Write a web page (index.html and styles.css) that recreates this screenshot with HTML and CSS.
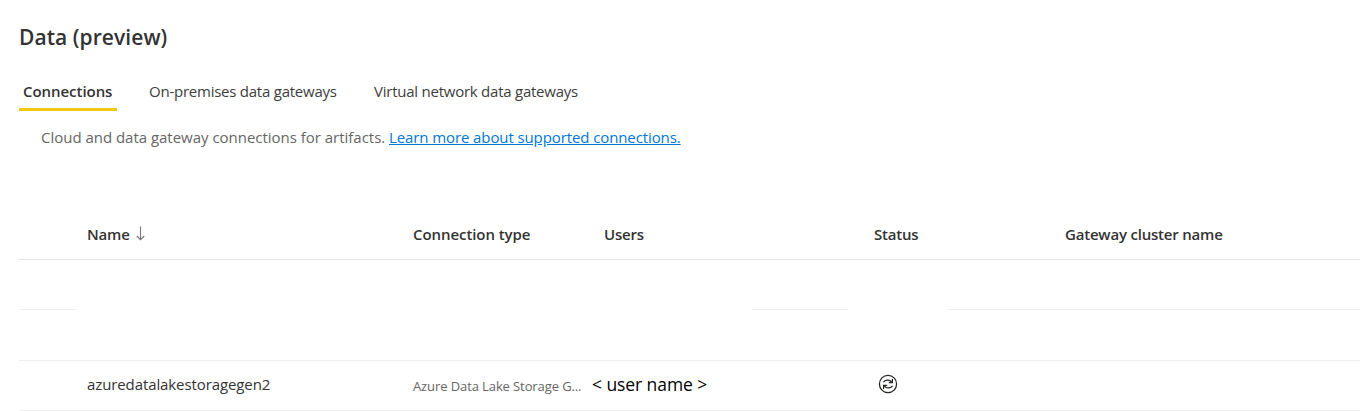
FILE: index.html
```html
<!DOCTYPE html>
<html lang="en">
<head>
<meta charset="utf-8">
<title>Data (preview)</title>
<link rel="stylesheet" href="styles.css">
</head>
<body>
<main class="page">
  <h1 class="title">Data (preview)</h1>
  <nav class="tabs">
    <a class="tab tab-active">Connections</a>
    <a class="tab tab-gateways">On-premises data gateways</a>
    <a class="tab tab-virtual">Virtual network data gateways</a>
  </nav>
  <p class="intro"><span class="intro-text">Cloud and data gateway connections for artifacts.</span><a class="link" href="#">Learn more about supported connections.</a></p>
  <section class="table">
    <div class="row head">
      <div class="cell"><span class="h-name">Name</span><svg class="sort" width="9" height="15" viewBox="0 0 9 15" fill="none" stroke="#777" stroke-width="1.1"><path d="M4.5 0.5v13M0.8 10l3.7 3.7L8.2 10"/></svg></div>
      <div class="cell"><span class="h-type">Connection type</span></div>
      <div class="cell"><span class="h-users">Users</span></div>
      <div class="cell"><span class="h-status">Status</span></div>
      <div class="cell"><span class="h-cluster">Gateway cluster name</span></div>
    </div>
    <div class="blank-row"><i class="rule"></i><i class="rule rule-middle"></i><i class="rule rule-end"></i></div>
    <div class="spacer-row"></div>
    <div class="row data">
      <div class="cell"><span class="d-name">azuredatalakestoragegen2</span></div>
      <div class="cell"><span class="d-type">Azure Data Lake Storage G...</span></div>
      <div class="cell user">&lt; user name &gt;</div>
      <div class="cell status"><svg width="20" height="20" viewBox="0 0 20 20" fill="none" stroke="#252423" stroke-width="1.25"><circle cx="10" cy="10" r="8.6"/><path d="M5.4 8.2C6.8 5.6 11.4 5.2 13.6 7.8M14.4 5v3.6h-3.6M14.6 11.8C13.2 14.4 8.6 14.8 6.4 12.2M5.6 15v-3.6h3.6"/></svg></div>
      <div class="cell"></div>
    </div>
  </section>
</main>
</body>
</html>
```
FILE: styles.css
```css
* { box-sizing: border-box; }
body { margin: 0; background: #fff; color: #333; font: 15px/20px "Open Sans", sans-serif; overflow: hidden; }
.page { height: 411px; padding-left: 19px; white-space: nowrap; }
.title { margin: 0; padding-top: 22px; height: 77px; font-size: 21px; line-height: 30px; font-weight: 600; letter-spacing: 0.07px; }
.tabs { display: flex; height: 34px; }
.tab { height: 34px; padding-top: 4px; color: #3d3d3d; letter-spacing: -0.24px; }
.tab-active { width: 98px; padding-left: 4px; border-bottom: 3px solid #f2c811; color: #333; font-weight: 600; letter-spacing: -0.05px; }
.tab-gateways { width: 225px; margin-left: 32px; }
.intro { display: flex; gap: 4px; margin: 0; padding: 16px 0 0 22px; height: 99px; color: #666; }
.intro-text { width: 344px; letter-spacing: -0.02px; }
.link { color: #0078d4; text-decoration: underline; letter-spacing: -0.1px; }
.row { display: grid; grid-template-columns: 326px 191px 270px 191px 1fr; padding-left: 68px; align-items: center; }
.cell { display: flex; align-items: center; }
.head { height: 50px; padding-bottom: 2px; border-bottom: 1px solid #e5e5e5; font-weight: 600; letter-spacing: -0.2px; }
.h-type { letter-spacing: -0.07px; }
.sort { margin-left: 6px; }
.blank-row { display: grid; grid-template-columns: 57px 676px 96px 100px 1fr; align-items: end; height: 50px; }
.rule { height: 1px; background: #eee; }
.rule-middle { grid-column: 3; }
.rule-end { grid-column: 5; }
.spacer-row { height: 51px; border-bottom: 1px solid #eee; }
.data { height: 50px; padding-bottom: 3px; border-bottom: 1px solid #eee; }
.d-name { letter-spacing: -0.1px; }
.d-type { font-size: 13px; color: #666; padding-top: 3px; letter-spacing: -0.1px; }
.user { margin-left: -12px; color: #000; font-size: 17.5px; letter-spacing: -0.08px; }
.status { padding-left: 4px; }
```
